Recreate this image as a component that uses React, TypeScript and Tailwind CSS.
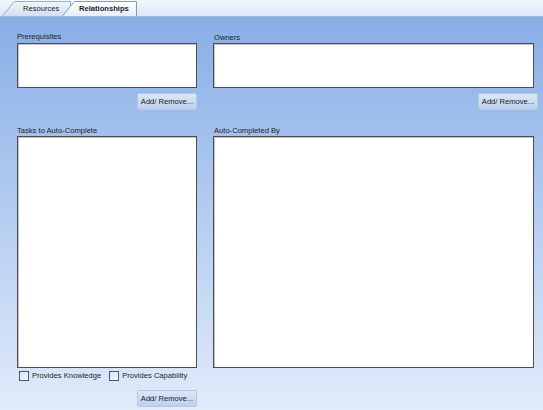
import React from "react";

const font = { fontFamily: '"Liberation Sans", Arial, sans-serif' };

function Tab({
  label,
  active,
  className,
}: {
  label: string;
  active?: boolean;
  className: string;
}) {
  const w = active ? 76 : 70;
  return (
    <div className={`relative h-[15px] ${className}`}>
      <svg className="absolute inset-0" width={w} height={15} viewBox={`0 0 ${w} 15`}>
        <defs>
          <linearGradient id={active ? "ta" : "ti"} x1="0" y1="0" x2="0" y2="1">
            <stop offset="0" stopColor={active ? "#ffffff" : "#f1f5fb"} />
            <stop offset="1" stopColor={active ? "#e6eefa" : "#d3def0"} />
          </linearGradient>
        </defs>
        <path
          d={`M0.5 15 L11.5 1.5 Q12.5 0.5 14 0.5 L${w - 1.5} 0.5 L${w - 1.5} 15`}
          fill={`url(#${active ? "ta" : "ti"})`}
          stroke={active ? "#7f9cc6" : "#97acc9"}
          strokeWidth="1"
        />
      </svg>
      <span
        className={`relative block leading-[15px] text-[7.6px] text-[#1e1e1e] ${
          active ? "pl-[17px] font-bold" : "pl-[21px]"
        }`}
      >
        {label}
      </span>
    </div>
  );
}

function ListBox({ className }: { className: string }) {
  return (
    <div
      className={`bg-white border border-[#4d4d4d] shadow-[inset_1px_1px_0_#c4c4c4] ${className}`}
    />
  );
}

function AddButton({ className = "" }: { className?: string }) {
  return (
    <button
      className={`h-[17px] w-[60px] rounded-[2px] border border-[#b3c9e8] bg-gradient-to-b from-[#dbe7f7] to-[#bcd0ee] text-[7.6px] leading-[15px] text-[#1a1a1a] ${className}`}
    >
      Add/ Remove...
    </button>
  );
}

function Check({ label }: { label: string }) {
  return (
    <label className="flex items-center gap-[3px]">
      <span className="w-[10px] h-[10px] border border-[#3d5a80] bg-gradient-to-br from-[#d9e1ea] to-[#f7f9fb]" />
      <span className="text-[7.6px] leading-[10px] text-[#1e1e1e]">{label}</span>
    </label>
  );
}

export default function App() {
  return (
    <div className="w-[543px] h-[410px] flex flex-col overflow-hidden" style={font}>
      <div className="h-[17px] flex items-end bg-gradient-to-b from-[#f4f8fd] to-[#dbe6f7] border-b border-[#9fb8de]">
        <Tab label="Resources" className="ml-[2px] w-[70px]" />
        <Tab label="Relationships" active className="-ml-[10px] w-[76px]" />
      </div>

      <div className="flex-1 bg-gradient-to-b from-[#88aee6] to-[#e1ebfa] pl-[17px] grid grid-cols-[180px_321px] gap-x-[16px]">
        <div className="flex flex-col">
          <div className="mt-[15px] h-[11px] text-[7.6px] leading-[10px] text-[#1e1e1e]">
            Prerequisites
          </div>
          <ListBox className="h-[45px]" />
          <AddButton className="mt-[5px] self-end" />
          <div className="mt-[16px] h-[10px] text-[7.6px] leading-[10px] text-[#1e1e1e]">
            Tasks to Auto-Complete
          </div>
          <ListBox className="h-[232px]" />
          <div className="mt-[3px] h-[10px] flex gap-[8px] pl-[2px]">
            <Check label="Provides Knowledge" />
            <Check label="Provides Capability" />
          </div>
          <AddButton className="mt-[9px] self-end h-[16px]" />
        </div>

        <div className="flex flex-col">
          <div className="mt-[16px] h-[10px] text-[7.6px] leading-[10px] text-[#1e1e1e] pl-[1px]">
            Owners
          </div>
          <ListBox className="h-[45px]" />
          <AddButton className="mt-[5px] self-end -mr-[4px]" />
          <div className="mt-[16px] h-[10px] text-[7.6px] leading-[10px] text-[#1e1e1e] pl-[1px]">
            Auto-Completed By
          </div>
          <ListBox className="h-[232px]" />
        </div>
      </div>
    </div>
  );
}
